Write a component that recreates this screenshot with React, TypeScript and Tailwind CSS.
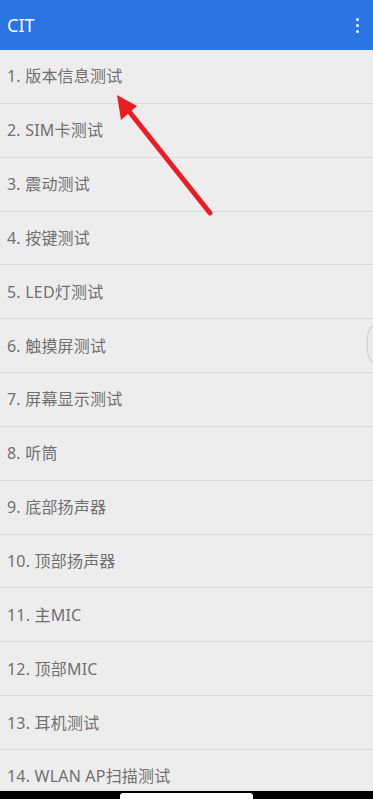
const items = [
  '1. 版本信息测试',
  '2. SIM卡测试',
  '3. 震动测试',
  '4. 按键测试',
  '5. LED灯测试',
  '6. 触摸屏测试',
  '7. 屏幕显示测试',
  '8. 听筒',
  '9. 底部扬声器',
  '10. 顶部扬声器',
  '11. 主MIC',
  '12. 顶部MIC',
  '13. 耳机测试',
  '14. WLAN AP扫描测试',
]

export default function App() {
  return (
    <div
      className="relative h-[799px] w-[373px] overflow-hidden bg-[#ededed]"
      style={{ fontFamily: '"Noto Sans", "Noto Sans CJK SC", sans-serif' }}
    >
      <header className="flex h-[50px] items-center justify-between bg-[#2a74e4] pl-[7px] pr-[14px]">
        <span className="text-[18px] text-white">CIT</span>
        <div className="flex flex-col gap-[3px]">
          <span className="h-[3px] w-[3px] rounded-full bg-white" />
          <span className="h-[3px] w-[3px] rounded-full bg-white" />
          <span className="h-[3px] w-[3px] rounded-full bg-white" />
        </div>
      </header>

      <ul>
        {items.map((label) => (
          <li
            key={label}
            className="flex h-[53.85px] items-center border-b border-[#d9d9d9] pl-[7px] text-[16px] tracking-[0.2px] text-[#707070]"
          >
            {label}
          </li>
        ))}
      </ul>

      {/* floating handle on the right edge */}
      <div className="absolute right-[-22px] top-[322px] h-[44px] w-[28px] rounded-full border border-[#cfcfcf] bg-[#eaeaea]" />

      {/* red annotation arrow */}
      <svg className="absolute left-0 top-0" width="373" height="799">
        <line x1="210" y1="213" x2="128" y2="110" stroke="#ec1c24" strokeWidth="5" strokeLinecap="round" />
        <polygon points="117,95 137,106 121,120" fill="#ec1c24" />
      </svg>

      {/* system nav bar */}
      <div className="absolute bottom-0 left-0 flex h-[8px] w-full justify-center bg-black">
        <div className="mt-[2px] h-[6px] w-[133px] rounded-t-[3px] bg-white" />
      </div>
    </div>
  )
}
